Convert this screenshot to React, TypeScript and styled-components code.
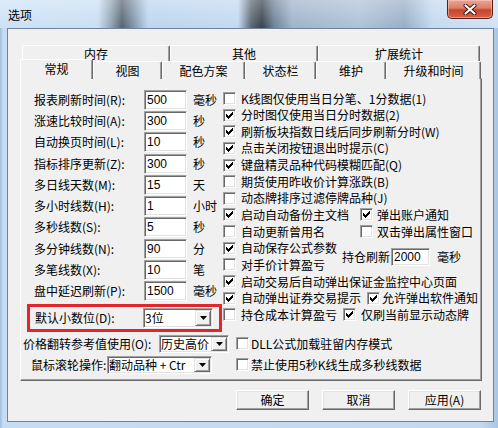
import React from 'react';
import styled, { createGlobalStyle } from 'styled-components';

const GlobalStyle = createGlobalStyle`
  html, body {
    margin: 0;
    padding: 0;
    background: #fff;
  }
  body {
    font-family: "Noto Sans CJK SC", "Liberation Sans", sans-serif;
    font-size: 12px;
    line-height: 16px;
    color: #000;
  }
  * {
    box-sizing: border-box;
  }
`;

const LEFT_FIELDS = [
  { label: '报表刷新时间(R):', value: '500', unit: '毫秒' },
  { label: '涨速比较时间(A):', value: '300', unit: '秒' },
  { label: '自动换页时间(L):', value: '10', unit: '秒' },
  { label: '指标排序更新(Z):', value: '300', unit: '秒' },
  { label: '多日线天数(M):', value: '15', unit: '天' },
  { label: '多小时线数(H):', value: '1', unit: '小时' },
  { label: '多秒线数(S):', value: '5', unit: '秒' },
  { label: '多分钟线数(N):', value: '90', unit: '分' },
  { label: '多笔线数(X):', value: '10', unit: '笔' },
  { label: '盘中延迟刷新(P):', value: '1500', unit: '毫秒' },
];

const SIMPLE_CHECKS = [
  { label: 'K线图仅使用当日分笔、1分数据(1)', checked: false },
  { label: '分时图仅使用当日分时数据(2)', checked: true },
  { label: '刷新板块指数日线后同步刷新分时(W)', checked: true },
  { label: '点击关闭按钮退出时提示(C)', checked: true },
  { label: '键盘精灵品种代码模糊匹配(Q)', checked: true },
  { label: '期货使用昨收价计算涨跌(B)', checked: false },
  { label: '动态牌排序过滤停牌品种(J)', checked: false },
];

const BACK_TABS = [
  { label: '内存', w: 148 },
  { label: '其他', w: 148 },
  { label: '扩展统计', w: 162 },
];

const FRONT_TABS = [
  { label: '常规', w: 73, active: true },
  { label: '视图', w: 69 },
  { label: '配色方案', w: 83 },
  { label: '状态栏', w: 71 },
  { label: '维护', w: 70 },
  { label: '升级和时间', w: 95 },
];

// classic check mark: seven columns, three pixels tall each
const TICK = [2, 3, 4, 3, 2, 1, 0];

const Tick = () => (
  <svg width="7" height="7" viewBox="0 0 7 7" shapeRendering="crispEdges">
    {TICK.map((y, x) => (
      <rect key={x} x={x} y={y} width="1" height="3" fill="#000" />
    ))}
  </svg>
);

const CheckItem = ({ checked, gap = 5, children }: { checked?: boolean; gap?: number; children: React.ReactNode }) => (
  <CheckWrap>
    <CheckBox>{checked && <Tick />}</CheckBox>
    <CheckText $gap={gap}>{children}</CheckText>
  </CheckWrap>
);

const Combo = ({ value, w, h }: { value: string; w: number; h: number }) => (
  <ComboBox $w={w} $h={h}>
    <ComboText>{value}</ComboText>
    <DropButton>
      <svg width="7" height="4" viewBox="0 0 7 4">
        <polygon points="0,0 7,0 3.5,4" fill="#000" />
      </svg>
    </DropButton>
  </ComboBox>
);

const App = () => {
  return (
    <>
      <GlobalStyle />
      <Window>
        <TitleBar>
          <Title>选项</Title>
          <CloseButton>
            <svg width="14" height="11" viewBox="0 0 14 11">
              <path d="M2.5 1.5 L11.5 9.5 M11.5 1.5 L2.5 9.5" stroke="#3b1209" strokeWidth="4" strokeLinecap="round" />
              <path d="M2.5 1.5 L11.5 9.5 M11.5 1.5 L2.5 9.5" stroke="#fff" strokeWidth="2.2" strokeLinecap="round" />
            </svg>
          </CloseButton>
        </TitleBar>

        <Client>
          <TabControl>
            <BackRow>
              {BACK_TABS.map((t) => (
                <Tab key={t.label} $w={t.w}>
                  {t.label}
                </Tab>
              ))}
            </BackRow>
            <FrontRow>
              {FRONT_TABS.map((t) => (
                <Tab key={t.label} $w={t.w} $active={t.active}>
                  {t.label}
                </Tab>
              ))}
            </FrontRow>

            <Panel>
              <TopSection>
                <LeftCol>
                  {LEFT_FIELDS.map((f) => (
                    <FieldRow key={f.label}>
                      <FieldLabel $w={110}>{f.label}</FieldLabel>
                      <TextBox $w={43} $h={20}>{f.value}</TextBox>
                      <Unit>{f.unit}</Unit>
                    </FieldRow>
                  ))}
                  <Highlight>
                    <FieldLabel $w={108}>默认小数位(D):</FieldLabel>
                    <Combo value="3位" w={70} h={20} />
                  </Highlight>
                </LeftCol>

                <RightCol>
                  {SIMPLE_CHECKS.map((c) => (
                    <CheckRow key={c.label}>
                      <CheckItem checked={c.checked}>{c.label}</CheckItem>
                    </CheckRow>
                  ))}
                  <CheckRow>
                    <FixedCell $w={137}>
                      <CheckItem checked>启动自动备份主文档</CheckItem>
                    </FixedCell>
                    <CheckItem checked gap={4}>弹出账户通知</CheckItem>
                  </CheckRow>
                  <CheckRow>
                    <FixedCell $w={137}>
                      <CheckItem>自动更新曾用名</CheckItem>
                    </FixedCell>
                    <CheckItem gap={4}>双击弹出属性窗口</CheckItem>
                  </CheckRow>
                  <PairBlock>
                    <FixedCell $w={120}>
                      <div>
                        <CheckRow>
                          <CheckItem checked>自动保存公式参数</CheckItem>
                        </CheckRow>
                        <CheckRow>
                          <CheckItem>对手价计算盈亏</CheckItem>
                        </CheckRow>
                      </div>
                    </FixedCell>
                    <RefreshGroup>
                      <span>持仓刷新</span>
                      <TextBox $w={39} $h={18}>2000</TextBox>
                      <RefreshUnit>毫秒</RefreshUnit>
                    </RefreshGroup>
                  </PairBlock>
                  <CheckRow>
                    <CheckItem checked>启动交易后自动弹出保证金监控中心页面</CheckItem>
                  </CheckRow>
                  <CheckRow>
                    <CheckItem checked>自动弹出证券交易提示</CheckItem>
                    <Spacer />
                    <CheckItem checked gap={2}>允许弹出软件通知</CheckItem>
                  </CheckRow>
                  <CheckRow>
                    <CheckItem>持仓成本计算盈亏</CheckItem>
                    <Spacer />
                    <CheckItem checked gap={5}>仅刷当前显示动态牌</CheckItem>
                  </CheckRow>
                </RightCol>
              </TopSection>

              <BottomSection>
                <BottomLeft $pad={2}>
                  <FieldLabel $w={136}>价格翻转参考值使用(O):</FieldLabel>
                  <Combo value="历史高价" w={70} h={18} />
                </BottomLeft>
                <CheckItem gap={2}>DLL公式加载驻留内存模式</CheckItem>
                <BottomLeft $pad={10}>
                  <FieldLabel $w={76}>鼠标滚轮操作:</FieldLabel>
                  <Combo value="翻动品种 + Ctr" w={105} h={18} />
                </BottomLeft>
                <CheckItem gap={2}>禁止使用5秒K线生成多秒线数据</CheckItem>
              </BottomSection>
            </Panel>
          </TabControl>

          <ButtonBar>
            <DialogButton>确定</DialogButton>
            <DialogButton>取消</DialogButton>
            <DialogButton>应用(A)</DialogButton>
          </ButtonBar>
        </Client>
      </Window>
    </>
  );
};

export default App;

const Window = styled.div`
  width: 498px;
  height: 428px;
  overflow: hidden;
  display: flex;
  flex-direction: column;
  background: linear-gradient(90deg, #9dbddd 0px, #c6dcf2 3px, #c2d9f0 480px, #aac6e3 498px);
`;

const TitleBar = styled.div`
  height: 28px;
  flex-shrink: 0;
  display: flex;
  justify-content: space-between;
  align-items: flex-start;
  background:
    linear-gradient(180deg, rgba(255, 255, 255, 0.3) 0%, rgba(255, 255, 255, 0) 100%),
    linear-gradient(
      90deg,
      #cde2f6 0px,
      #c9dff4 98px,
      #8c9eb0 112px,
      #56636f 122px,
      #7a8ea2 132px,
      #bcd5ee 148px,
      #c2d9f1 238px,
      #5a6773 251px,
      #36414c 262px,
      #6c8196 274px,
      #9db3ca 292px,
      #adc2d7 360px,
      #97aec6 405px,
      #c3d9f0 432px,
      #cfe3f7 498px
    );
`;

const Title = styled.div`
  padding: 7px 0 0 8px;
  font-size: 12px;
  line-height: 16px;
`;

const CloseButton = styled.div`
  width: 46px;
  height: 19px;
  margin-right: 5px;
  border: 1px solid #5b1c12;
  border-top: none;
  border-radius: 0 0 5px 5px;
  background: linear-gradient(180deg, #e9a697 0%, #dc7d69 45%, #c8442b 55%, #d6614a 100%);
  box-shadow: inset 0 0 0 1px rgba(255, 210, 200, 0.5);
  display: flex;
  align-items: center;
  justify-content: center;
`;

const Client = styled.div`
  width: 487px;
  height: 394px;
  margin-left: 7px;
  border: 1px solid #6f849c;
  background: #f0f0f0;
  padding: 15px 0 0 12px;
`;

const TabControl = styled.div`
  width: 462px;
`;

const BackRow = styled.div`
  display: flex;
  height: 16px;
  padding-left: 2px;
`;

const FrontRow = styled.div`
  display: flex;
  align-items: flex-end;
  height: 18px;
  position: relative;
  z-index: 1;
`;

const Tab = styled.div<{ $w: number; $active?: boolean }>`
  width: ${({ $w }) => $w}px;
  height: ${({ $active }) => ($active ? '20px' : '100%')};
  margin-bottom: ${({ $active }) => ($active ? '-1px' : '0')};
  align-self: ${({ $active }) => ($active ? 'flex-end' : 'stretch')};
  margin-top: ${({ $active }) => ($active ? '0' : '1px')};
  background: #f0f0f0;
  border-top: 1px solid #fff;
  border-left: 1px solid #fff;
  border-right: 1px solid #696969;
  box-shadow: inset -1px 0 0 #a0a0a0;
  border-radius: 2px 2px 0 0;
  display: flex;
  align-items: ${({ $active }) => ($active ? 'flex-start' : 'center')};
  padding-top: ${({ $active }) => ($active ? '1px' : '0')};
  justify-content: center;
  white-space: nowrap;
  font-size: 12px;
  line-height: 15px;
`;

const Panel = styled.div`
  width: 462px;
  height: 303px;
  border-top: 1px solid #fff;
  border-left: 1px solid #fff;
  border-right: 1px solid #696969;
  border-bottom: 1px solid #696969;
  box-shadow: inset -1px -1px 0 #a0a0a0;
`;

const TopSection = styled.div`
  display: flex;
  height: 253px;
`;

const LeftCol = styled.div`
  width: 201px;
  flex-shrink: 0;
  padding-top: 10px;
`;

const FieldRow = styled.div`
  display: flex;
  align-items: center;
  height: 21.3px;
  padding-left: 13px;
`;

const FieldLabel = styled.div<{ $w: number }>`
  width: ${({ $w }) => $w}px;
  flex-shrink: 0;
  white-space: nowrap;
`;

const TextBox = styled.div<{ $w: number; $h: number }>`
  width: ${({ $w }) => $w}px;
  height: ${({ $h }) => $h}px;
  flex-shrink: 0;
  background: #fff;
  border: 1px solid;
  border-color: #a0a0a0 #fff #fff #a0a0a0;
  box-shadow: inset 1px 1px 0 #696969, inset -1px -1px 0 #e3e3e3;
  padding-left: 2px;
  display: flex;
  align-items: center;
  font-family: "Liberation Sans", sans-serif;
  font-size: 12px;
`;

const Unit = styled.span`
  margin-left: 6px;
  white-space: nowrap;
`;

const Highlight = styled.div`
  margin: 2px 0 0 6px;
  width: 195px;
  height: 28px;
  border: 3px solid #e3262b;
  display: flex;
  align-items: center;
  padding-left: 5px;
  position: relative;
  z-index: 1;
`;

const ComboBox = styled.div<{ $w: number; $h: number }>`
  width: ${({ $w }) => $w}px;
  height: ${({ $h }) => $h}px;
  flex-shrink: 0;
  display: flex;
  background: #fff;
  border: 1px solid;
  border-color: #a0a0a0 #fff #fff #a0a0a0;
  box-shadow: inset 1px 1px 0 #696969, inset -1px -1px 0 #e3e3e3;
  padding: 1px;
`;

const ComboText = styled.div`
  flex: 1;
  white-space: pre;
  display: flex;
  align-items: center;
`;

const DropButton = styled.div`
  width: 16px;
  flex-shrink: 0;
  background: #f0f0f0;
  border: 1px solid;
  border-color: #e3e3e3 #696969 #696969 #e3e3e3;
  box-shadow: inset 1px 1px 0 #fff, inset -1px -1px 0 #a0a0a0;
  display: flex;
  align-items: center;
  justify-content: center;
`;

const RightCol = styled.div`
  flex: 1;
  padding-top: 11.2px;
`;

const CheckRow = styled.div`
  display: flex;
  align-items: center;
  height: 16.65px;
  white-space: nowrap;
`;

const FixedCell = styled.div<{ $w: number }>`
  width: ${({ $w }) => $w}px;
  flex-shrink: 0;
`;

const CheckWrap = styled.div`
  display: flex;
  align-items: center;
  white-space: nowrap;
`;

const CheckBox = styled.div`
  width: 13px;
  height: 13px;
  margin-left: 1px;
  flex-shrink: 0;
  background: #fff;
  border: 1px solid;
  border-color: #a0a0a0 #fff #fff #a0a0a0;
  box-shadow: inset 1px 1px 0 #696969, inset -1px -1px 0 #e3e3e3;
  display: flex;
  align-items: center;
  justify-content: center;
`;

const CheckText = styled.span<{ $gap: number }>`
  margin-left: ${({ $gap }) => $gap}px;
`;

const Spacer = styled.span`
  width: 5px;
`;

const PairBlock = styled.div`
  display: flex;
  align-items: center;
`;

const RefreshGroup = styled.div`
  display: flex;
  align-items: center;
  white-space: nowrap;
  span:first-child {
    width: 49px;
  }
`;

const RefreshUnit = styled.span`
  margin-left: 7px;
`;

const BottomSection = styled.div`
  display: grid;
  grid-template-columns: 214px 1fr;
  grid-auto-rows: 21px;
  align-items: center;
  margin-top: 1px;
`;

const BottomLeft = styled.div<{ $pad: number }>`
  display: flex;
  align-items: center;
  padding-left: ${({ $pad }) => $pad}px;
`;

const ButtonBar = styled.div`
  width: 462px;
  display: flex;
  justify-content: flex-end;
  gap: 13px;
  margin-top: 9px;
  padding-right: 1px;
`;

const DialogButton = styled.div`
  width: 73px;
  height: 20px;
  background: #f0f0f0;
  border: 1px solid;
  border-color: #fff #696969 #696969 #fff;
  box-shadow: inset -1px -1px 0 #a0a0a0, inset 1px 1px 0 #e3e3e3;
  display: flex;
  align-items: center;
  justify-content: center;
`;
